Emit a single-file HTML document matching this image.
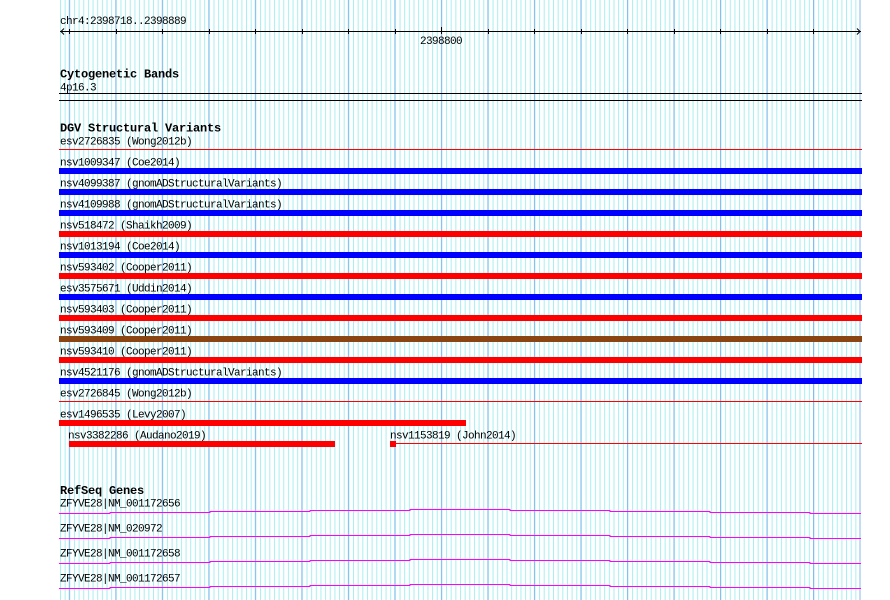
<!DOCTYPE html>
<html><head><meta charset="utf-8"><style>
html,body{margin:0;padding:0;background:#fff;width:890px;height:600px;overflow:hidden}
svg{display:block}
text{font-family:"Liberation Mono",monospace;font-size:11px;letter-spacing:-0.6px;fill:#000}
.b{font-weight:bold;font-size:12px;letter-spacing:-0.2px}
</style></head><body>
<svg width="890" height="600" viewBox="0 0 890 600" xmlns="http://www.w3.org/2000/svg">
<defs>
<pattern id="g" patternUnits="userSpaceOnUse" x="60" y="0" width="4.6512" height="600">
<rect x="0" y="0" width="1" height="600" fill="#a8eef0"/>
</pattern>
<pattern id="G" patternUnits="userSpaceOnUse" x="68.8" y="0" width="46.512" height="600">
<rect x="0" y="0" width="1" height="600" fill="#88bbee"/>
</pattern>
</defs>
<rect x="60" y="0" width="800" height="600" fill="url(#g)"/>
<rect x="60" y="0" width="802" height="600" fill="url(#G)"/>

<text x="60" y="24">chr4:2398718..2398889</text>
<line x1="60" y1="31.5" x2="861" y2="31.5" stroke="#000"/>
<path d="M64 28.5 L61 31.5 L64 34.5 M857 28.5 L860 31.5 L857 34.5" stroke="#000" fill="none"/>
<g stroke="#000">
<line x1="69.5" y1="29" x2="69.5" y2="34"/><line x1="116.5" y1="29" x2="116.5" y2="34"/>
<line x1="162.5" y1="29" x2="162.5" y2="34"/><line x1="209.5" y1="29" x2="209.5" y2="34"/>
<line x1="255.5" y1="29" x2="255.5" y2="34"/><line x1="302.5" y1="29" x2="302.5" y2="34"/>
<line x1="348.5" y1="29" x2="348.5" y2="34"/><line x1="395.5" y1="29" x2="395.5" y2="34"/>
<line x1="441.5" y1="27" x2="441.5" y2="34"/><line x1="488.5" y1="29" x2="488.5" y2="34"/>
<line x1="534.5" y1="29" x2="534.5" y2="34"/><line x1="581.5" y1="29" x2="581.5" y2="34"/>
<line x1="627.5" y1="29" x2="627.5" y2="34"/><line x1="674.5" y1="29" x2="674.5" y2="34"/>
<line x1="720.5" y1="29" x2="720.5" y2="34"/><line x1="767.5" y1="29" x2="767.5" y2="34"/>
<line x1="813.5" y1="29" x2="813.5" y2="34"/>
</g>
<text x="441" y="44" text-anchor="middle">2398800</text>

<text class="b" x="60" y="77.5">Cytogenetic Bands</text>
<text x="60" y="90.5">4p16.3</text>
<rect x="59" y="93" width="803" height="1" fill="#000"/>
<rect x="59" y="100" width="803" height="1" fill="#000"/>

<text class="b" x="60" y="131.5">DGV Structural Variants</text>
<text x="60" y="144.5">esv2726835 (Wong2012b)</text>
<rect x="59" y="149" width="803" height="1" fill="#f00"/>
<text x="60" y="165.5">nsv1009347 (Coe2014)</text>
<rect x="59" y="168" width="803" height="6" fill="#00f"/>
<text x="60" y="186.5">nsv4099387 (gnomADStructuralVariants)</text>
<rect x="59" y="189" width="803" height="6" fill="#00f"/>
<text x="60" y="207.5">nsv4109988 (gnomADStructuralVariants)</text>
<rect x="59" y="210" width="803" height="6" fill="#00f"/>
<text x="60" y="228.5">nsv518472 (Shaikh2009)</text>
<rect x="59" y="231" width="803" height="6" fill="#f00"/>
<text x="60" y="249.5">nsv1013194 (Coe2014)</text>
<rect x="59" y="252" width="803" height="6" fill="#00f"/>
<text x="60" y="270.5">nsv593402 (Cooper2011)</text>
<rect x="59" y="273" width="803" height="6" fill="#f00"/>
<text x="60" y="291.5">esv3575671 (Uddin2014)</text>
<rect x="59" y="294" width="803" height="6" fill="#00f"/>
<text x="60" y="312.5">nsv593403 (Cooper2011)</text>
<rect x="59" y="315" width="803" height="6" fill="#f00"/>
<text x="60" y="333.5">nsv593409 (Cooper2011)</text>
<rect x="59" y="336" width="803" height="6" fill="#8b4513"/>
<text x="60" y="354.5">nsv593410 (Cooper2011)</text>
<rect x="59" y="357" width="803" height="6" fill="#f00"/>
<text x="60" y="375.5">nsv4521176 (gnomADStructuralVariants)</text>
<rect x="59" y="378" width="803" height="6" fill="#00f"/>
<text x="60" y="396.5">esv2726845 (Wong2012b)</text>
<rect x="59" y="401" width="803" height="1" fill="#f00"/>
<text x="60" y="417.5">esv1496535 (Levy2007)</text>
<rect x="59" y="420" width="407" height="6" fill="#f00"/>
<text x="68" y="438.5">nsv3382286 (Audano2019)</text>
<rect x="69" y="441" width="266" height="6" fill="#f00"/>
<text x="390" y="438.5">nsv1153819 (John2014)</text>
<rect x="390" y="441" width="6" height="6" fill="#f00"/>
<rect x="396" y="443" width="466" height="1" fill="#f00"/>

<text class="b" x="60" y="494">RefSeq Genes</text>
<g fill="none" stroke="#ff00ff" stroke-width="1">
<path d="M59 513.5H110V512.5H210V511.5H310V510.5H410V509.5H510V510.5H610V511.5H710V512.5H810V513.5H861"/>
<path d="M59 538.5H110V537.5H210V536.5H310V535.5H410V534.5H510V535.5H610V536.5H710V537.5H810V538.5H861"/>
<path d="M59 563.5H110V562.5H210V561.5H310V560.5H410V559.5H510V560.5H610V561.5H710V562.5H810V563.5H861"/>
<path d="M59 588.5H110V587.5H210V586.5H310V585.5H410V584.5H510V585.5H610V586.5H710V587.5H810V588.5H861"/>
</g>
<text x="60" y="506.5">ZFYVE28|NM_001172656</text>
<text x="60" y="531.5">ZFYVE28|NM_020972</text>
<text x="60" y="556.5">ZFYVE28|NM_001172658</text>
<text x="60" y="581.5">ZFYVE28|NM_001172657</text>
</svg>
</body></html>
